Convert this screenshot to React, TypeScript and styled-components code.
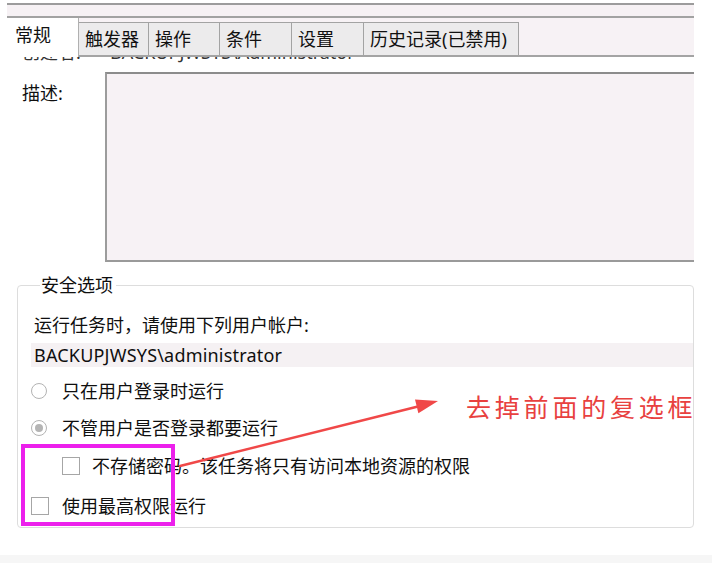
import React from "react";
import styled, { createGlobalStyle } from "styled-components";

const GlobalStyle = createGlobalStyle`
  html, body { margin: 0; padding: 0; background: #ffffff; }
  body { font-family: "Noto Sans", "Noto Sans CJK SC", sans-serif; color: #1c1c1c; }
  * { box-sizing: border-box; }
`;

const Page = styled.div`
  position: relative;
  width: 712px;
  height: 563px;
  overflow: hidden;
  display: flex;
  flex-direction: column;
  background: #ffffff;
  font-family: "Noto Sans", "Noto Sans CJK SC", sans-serif;
  font-size: 18px;
  color: #0f0f0f;
`;

const Frame = styled.div`
  margin-left: 7px;
  width: 687px;
  display: flex;
  flex-direction: column;
  flex: none;
`;

const TopBand = styled.div`
  margin-top: 3px;
  height: 15px;
  flex: none;
  border-top: 2px solid #9c9c9c;
  border-bottom: 2px solid #a2a2a2;
  background: #f6f1f4;
`;

const TabStrip = styled.div`
  height: 39px;
  flex: none;
  display: flex;
  align-items: flex-end;
  background: #f7f2f5;
  border-bottom: 2px solid #a4a4a4;
`;

const Tab = styled.div<{ $w: number; $active?: boolean }>`
  width: ${(p) => p.$w}px;
  height: ${(p) => (p.$active ? 39 : 33)}px;
  margin-bottom: ${(p) => (p.$active ? -2 : 0)}px;
  padding-left: ${(p) => (p.$active ? 8 : 6)}px;
  padding-bottom: ${(p) => (p.$active ? 6 : 0)}px;
  display: flex;
  align-items: center;
  flex: none;
  background: ${(p) => (p.$active ? "#ffffff" : "#ecebec")};
  border-top: ${(p) => (p.$active ? "none" : "1px solid #a3a3a3")};
  border-right: ${(p) => (p.$active ? "1px solid #b0b0b0" : "1px solid #a3a3a3")};
  font-size: 18px;
  line-height: 24px;
  color: #111;
  white-space: nowrap;
`;

const Content = styled.div`
  display: flex;
  flex-direction: column;
  background: #ffffff;
`;

const CutRow = styled.div`
  height: 6px;
  flex: none;
  overflow: hidden;
  display: flex;
  align-items: flex-start;
  font-size: 18px;
  color: #333;
`;

const CutText = styled.span<{ $w: number; $pl?: number }>`
  display: block;
  width: ${(p) => p.$w}px;
  padding-left: ${(p) => p.$pl ?? 0}px;
  margin-top: -17px;
  line-height: 24px;
  height: 24px;
  flex: none;
  white-space: nowrap;
`;

const DescRow = styled.div`
  margin-top: 9px;
  display: flex;
  align-items: flex-start;
`;

const DescLabel = styled.div`
  width: 98px;
  padding-left: 15px;
  padding-top: 9px;
  line-height: 24px;
  font-size: 18px;
`;

const TextArea = styled.div`
  flex: 1;
  height: 190px;
  background: #f7f2f5;
  border-top: 2px solid #8c8c8c;
  border-left: 2px solid #9c9c9c;
  border-bottom: 2px solid #9a9a9a;
`;

const Group = styled.fieldset`
  margin: 11px 0 0 10px;
  padding: 0 0 9px 13px;
  border: 1px solid #dddddd;
  border-radius: 4px;
  display: flex;
  flex-direction: column;
  min-width: 0;
`;

const Legend = styled.legend`
  margin-left: 9px;
  padding: 0 3px 0 1px;
  font-size: 18px;
  line-height: 24px;
`;

const Line = styled.div<{ $mt: number }>`
  margin-top: ${(p) => p.$mt}px;
  padding-left: 3px;
  line-height: 24px;
  height: 24px;
  font-size: 18px;
  white-space: nowrap;
`;

const Field = styled.div`
  margin-top: 6px;
  height: 24px;
  padding-left: 3px;
  background: #f5f1f3;
  line-height: 24px;
  font-size: 18px;
  letter-spacing: 0.2px;
  white-space: nowrap;
`;

const OptionRow = styled.div<{ $mt: number; $indent?: number; $gap: number }>`
  margin-top: ${(p) => p.$mt}px;
  padding-left: ${(p) => p.$indent ?? 0}px;
  height: 24px;
  display: flex;
  align-items: center;
  gap: ${(p) => p.$gap}px;
  font-size: 18px;
  line-height: 24px;
  white-space: nowrap;
`;

const Radio = styled.span<{ $on?: boolean }>`
  width: 16px;
  height: 16px;
  flex: none;
  border-radius: 50%;
  border: 1px solid #b3b3b3;
  background: #ffffff;
  display: flex;
  align-items: center;
  justify-content: center;
  &::after {
    content: "";
    display: ${(p) => (p.$on ? "block" : "none")};
    width: 8px;
    height: 8px;
    border-radius: 50%;
    background: #b4b4b4;
  }
`;

const Check = styled.span`
  width: 18px;
  height: 18px;
  flex: none;
  border: 1px solid #a6a6a6;
  background: #ffffff;
`;

const BottomBand = styled.div`
  margin-top: auto;
  height: 8px;
  flex: none;
  background: #f6f6f6;
`;

const Highlight = styled.div`
  position: absolute;
  left: 21px;
  top: 444px;
  width: 154px;
  height: 82px;
  border: 4px solid #ec20ec;
  pointer-events: none;
`;

const Arrow = styled.svg`
  position: absolute;
  left: 0;
  top: 0;
  width: 712px;
  height: 563px;
  pointer-events: none;
`;

const Note = styled.div`
  position: absolute;
  left: 466px;
  top: 390px;
  font-family: "Noto Sans CJK SC", sans-serif;
  font-size: 25px;
  line-height: 32px;
  letter-spacing: 3.8px;
  color: #e8413f;
  white-space: nowrap;
`;

const tabs: { label: string; w: number; active?: boolean }[] = [
  { label: "常规", w: 72, active: true },
  { label: "触发器", w: 70 },
  { label: "操作", w: 71 },
  { label: "条件", w: 72 },
  { label: "设置", w: 72 },
  { label: "历史记录(已禁用)", w: 155 },
];

export default function App() {
  return (
    <>
      <GlobalStyle />
      <Page>
        <Frame>
          <TopBand />
          <TabStrip>
            {tabs.map((t) => (
              <Tab key={t.label} $w={t.w} $active={t.active}>
                {t.label}
              </Tab>
            ))}
          </TabStrip>
          <Content>
            <CutRow>
              <CutText $w={103} $pl={15}>创建者:</CutText>
              <CutText $w={300}>BACKUPJWSYS\Administrator</CutText>
            </CutRow>
            <DescRow>
              <DescLabel>描述:</DescLabel>
              <TextArea />
            </DescRow>
            <Group>
              <Legend>安全选项</Legend>
              <Line $mt={16}>运行任务时，请使用下列用户帐户:</Line>
              <Field>BACKUPJWSYS\administrator</Field>
              <OptionRow $mt={12} $gap={15}>
                <Radio />
                只在用户登录时运行
              </OptionRow>
              <OptionRow $mt={13} $gap={15}>
                <Radio $on />
                不管用户是否登录都要运行
              </OptionRow>
              <OptionRow $mt={14} $indent={31} $gap={12}>
                <Check />
                不存储密码。该任务将只有访问本地资源的权限
              </OptionRow>
              <OptionRow $mt={16} $gap={13}>
                <Check />
                使用最高权限运行
              </OptionRow>
            </Group>
          </Content>
        </Frame>
        <BottomBand />
        <Highlight />
        <Arrow viewBox="0 0 712 563">
          <line x1="180" y1="466" x2="420" y2="406" stroke="#f04848" strokeWidth="2.6" strokeLinecap="round" />
          <polygon points="438,401 418.4,413.2 415,399.6" fill="#f04848" />
        </Arrow>
        <Note>去掉前面的复选框</Note>
      </Page>
    </>
  );
}
